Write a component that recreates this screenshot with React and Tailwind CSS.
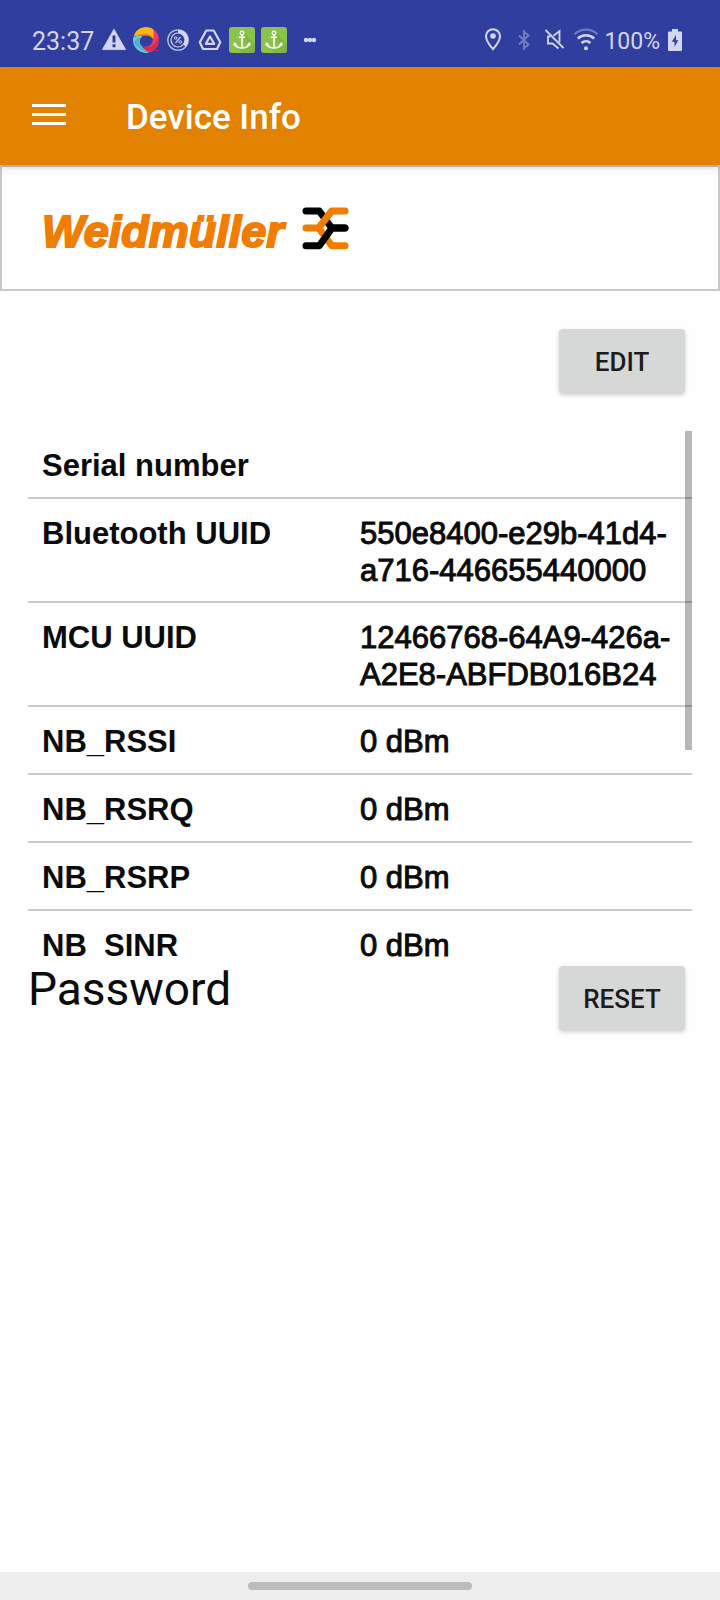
import React from "react";

const INK = "#d3d6ee";

const rows = [
  { label: "Serial number", value: "" },
  { label: "Bluetooth UUID", value: "550e8400-e29b-41d4-a716-446655440000" },
  { label: "MCU UUID", value: "12466768-64A9-426a-A2E8-ABFDB016B24" },
  { label: "NB_RSSI", value: "0 dBm" },
  { label: "NB_RSRQ", value: "0 dBm" },
  { label: "NB_RSRP", value: "0 dBm" },
  { label: "NB_SINR", value: "0 dBm" },
];

function Icon({ children, ...rest }) {
  return (
    <svg className="size-[26px] shrink-0" viewBox="0 0 26 26" fill="none" aria-hidden="true" {...rest}>
      {children}
    </svg>
  );
}

function WarningIcon() {
  return (
    <Icon>
      <path d="M13 2.200 24.600 22.600H1.400Z" fill={INK} stroke={INK} strokeWidth="0.8" strokeLinejoin="round" />
      <path d="M13 8.500v7M13 17.200v3" stroke="#303f9f" strokeWidth="3" />
    </Icon>
  );
}

function SwirlIcon() {
  return (
    <Icon>
      <path d="M20 2.500C24 4.500 26 8.500 26 13c0 5.500-3.500 10.300-8.500 12-3 .5-5-1.500-7-5.500 5 1 8-1.500 9-5 1-4 .8-8 .5-12Z" fill="#ef3a63" />
      <path d="M25.500 9c-1 5-3.500 8.500-7.500 10.500-2 1-4.500 1-7.500 0l2.500 4c5 1 8.500-.5 10.500-4 1.800-3 2.300-6 2-10.500Z" fill="#dc2456" />
      <path d="M.3 10C4 8.700 7.500 8.500 9.500 9.300 6 12 6 16 8.500 18.500c2 3 5 6 7.500 7.200C8 27 .5 21.500 0 14c0-1.500 0-2.700.3-4Z" fill="#6fcbe2" />
      <path d="M.1 15C3 12.500 5 10.500 8 10c-2.500 3-2 6.500.5 9l5.500 6.500C9 24 3 20 .1 15Z" fill="#4eb2d0" />
      <path d="M.8 9.500C2 4 7 0 13 0c3 0 6 1 7.500 2.800C21 6 20.800 9 20 12c-2-4-5.500-5.500-10-4.500C6 8 3 8 .8 9.500Z" fill="#fdb515" />
      <path d="M.8 9.500C4 7.500 9 6.500 14 6.500c3.500.5 5 2.500 6 5.500-2-3-5.500-4.200-10-3.200C6 9 3 8.800.8 9.500Z" fill="#f58a1f" />
      <path d="M22.500 23.500H26" stroke="#dc2456" strokeWidth="1" />
    </Icon>
  );
}

function PercentIcon() {
  return (
    <Icon>
      <circle cx="13" cy="13" r="10.200" stroke={INK} strokeWidth="1.300" opacity="0.85" />
      <circle cx="13" cy="13" r="7" stroke={INK} strokeWidth="1.200" />
      <path d="M13 4.400A8.600 8.600 0 0 1 19.500 18.600" stroke={INK} strokeWidth="3.200" />
      <path d="M15.500 9.800 10.500 16.200" stroke={INK} strokeWidth="1.200" />
      <circle cx="10.700" cy="11" r="1.300" stroke={INK} strokeWidth="1" />
      <circle cx="15.300" cy="15" r="1.300" stroke={INK} strokeWidth="1" />
    </Icon>
  );
}

function DriveIcon() {
  return (
    <Icon>
      <path d="M9.300 3.500h7.400L23.200 15.200 20 22H6L2.800 15.200Z" stroke={INK} strokeWidth="2.200" strokeLinejoin="round" />
      <path d="M13 9.500 17.200 16.800H8.800Z" stroke={INK} strokeWidth="2.200" strokeLinejoin="round" />
    </Icon>
  );
}

function AnchorIcon() {
  return (
    <Icon>
      <rect width="26" height="26" rx="3" fill="#8bc34a" />
      <path d="M15 6 26 17v6a3 3 0 0 1-3 3h-9L8 21l10-1Z" fill="#7cb342" opacity="0.75" />
      <circle cx="13" cy="6" r="1.800" stroke="#fff" strokeWidth="1.300" />
      <path d="M13 8v13M9.800 10.300h6.400M5.600 16.800C6.500 19.500 9.500 21 13 21s6.500-1.500 7.400-4.200" stroke="#fff" strokeWidth="1.600" />
      <path d="m4.300 19 .6-4 3.400 2.500ZM21.700 19l-.6-4-3.400 2.500Z" fill="#fff" />
    </Icon>
  );
}

function DotsIcon() {
  return (
    <Icon fill={INK}>
      <circle cx="13" cy="13" r="2.200" />
      <circle cx="17" cy="13" r="2.200" />
      <circle cx="21" cy="13" r="2.200" />
    </Icon>
  );
}

function LocationIcon() {
  return (
    <Icon>
      <path d="M13 2.200a7 7 0 0 0-7 7c0 4.800 7 13 7 13s7-8.200 7-13a7 7 0 0 0-7-7Z" stroke={INK} strokeWidth="2" />
      <circle cx="13" cy="9" r="2.800" fill={INK} />
    </Icon>
  );
}

function BluetoothIcon() {
  return (
    <Icon opacity="0.4">
      <path d="M8 8.500 17.500 17.500 13 21.500V4.500L17.500 8.500 8 17.500" stroke={INK} strokeWidth="2" />
    </Icon>
  );
}

function MuteIcon() {
  return (
    <Icon>
      <path d="m3.500 3 18 18" stroke={INK} strokeWidth="1.800" />
      <path d="M11.500 8.800 17.500 4v11.500M8.500 9.500H6v7h4.500l6 5" stroke={INK} strokeWidth="1.800" />
    </Icon>
  );
}

function WifiIcon() {
  return (
    <Icon>
      <path d="M1.500 7.200C8 1.200 18 1.200 24.500 7.200" stroke={INK} strokeWidth="2.200" opacity="0.4" />
      <path d="M4.800 11.500C9.500 7.200 16.500 7.200 21.200 11.500" stroke={INK} strokeWidth="2.500" />
      <path d="M8.600 16c2.600-2.500 6.200-2.500 8.800 0" stroke={INK} strokeWidth="2.500" />
      <circle cx="13" cy="21.200" r="2" fill={INK} />
    </Icon>
  );
}

function BatteryIcon() {
  return (
    <svg className="h-[22px] w-[14px] shrink-0" viewBox="0 0 14 22" aria-hidden="true">
      <path d="M4 0h6v2.500h2.800A1.200 1.200 0 0 1 14 3.700v17.100a1.200 1.200 0 0 1-1.200 1.200H1.200A1.200 1.200 0 0 1 0 20.800V3.700a1.200 1.200 0 0 1 1.200-1.200H4Z" fill={INK} />
      <path d="M8 6 3.800 12.800h2.700V18l3.800-6.800H8Z" fill="#303f9f" />
    </svg>
  );
}

function Emblem() {
  return (
    <svg className="h-[43px] w-[47px] shrink-0" viewBox="36 34 141 129" fill="none" strokeWidth="21" strokeLinecap="round" strokeLinejoin="round" aria-hidden="true">
      <path d="M48 46H88L125 97H165" stroke="#000" />
      <path d="M165 150H125L86 97" stroke="#f07d00" />
      <path d="M48 97H86L125 46H165" stroke="#f07d00" />
      <path d="M48 150H88L126 97H165" stroke="#000" />
    </svg>
  );
}

function ActionButton({ children }) {
  return (
    <button
      type="button"
      className="mr-[7px] h-16 w-[126px] shrink-0 rounded-[4px] bg-[#d6d8d7] pt-[2px] text-[26px] leading-8 font-medium text-[#1c1c1c] shadow-[0_2px_4px_rgba(0,0,0,0.2)]"
    >
      {children}
    </button>
  );
}

export default function App() {
  return (
    <div className="flex min-h-screen flex-col bg-[#fefefe] font-[Roboto,sans-serif] text-[#0b0b0b]">
      <div className="flex h-[67px] items-center justify-between bg-[#303f9f] pt-[13px] pr-[38px] pl-8 text-[#d3d6ee]">
        <div className="flex items-center gap-[6px]">
          <span className="mr-px pt-1 text-[25px] leading-8">23:37</span>
          <WarningIcon />
          <SwirlIcon />
          <PercentIcon />
          <DriveIcon />
          <AnchorIcon />
          <AnchorIcon />
          <DotsIcon />
        </div>
        <div className="flex items-center gap-[5px]">
          <LocationIcon />
          <BluetoothIcon />
          <MuteIcon />
          <WifiIcon />
          <span className="mr-[3px] pt-1 text-[23px] leading-8">100%</span>
          <BatteryIcon />
        </div>
      </div>

      <header className="relative flex h-[98px] items-center gap-[60px] bg-[#e38200] pl-8 text-white shadow-[0_2px_6px_rgba(0,0,0,0.2)]">
        <button type="button" aria-label="Open menu" className="flex w-[34px] flex-col gap-[6px] pb-1">
          <span className="h-[3px] w-full bg-white" />
          <span className="h-[3px] w-full bg-white" />
          <span className="h-[3px] w-full bg-white" />
        </button>
        <h1 className="pt-1 text-[35px] leading-10 font-medium">Device Info</h1>
      </header>

      <div className="flex h-[126px] items-center gap-[18px] border-2 border-[#c8c8c8] pl-10">
        <span className="pt-2 font-['Liberation_Sans',Arial,sans-serif] text-[45px] leading-[52px] font-bold text-[#f07d00] italic [-webkit-text-stroke:2px_#f07d00]">
          Weidmüller
        </span>
        <Emblem />
      </div>

      <main className="flex flex-1 flex-col px-7 pt-[38px]">
        <div className="flex justify-end">
          <ActionButton>EDIT</ActionButton>
        </div>

        <div className="relative mt-[38px]">
          <div className="h-[526px] overflow-y-auto [scrollbar-width:none]">
            <table className="w-full table-fixed border-separate border-spacing-0 text-left font-['Liberation_Sans',Arial,sans-serif] text-[31px] leading-[37px]">
              <tbody>
                {rows.map((row) => (
                  <tr key={row.label} className="h-[68px] align-top">
                    <th scope="row" className="w-1/2 border-b-2 border-[#cbcbcb] pt-4 pb-3 pl-[14px] font-bold">
                      {row.label}
                    </th>
                    <td className="w-1/2 border-b-2 border-[#cbcbcb] pt-4 pb-3 [-webkit-text-stroke:1px_#0b0b0b]">
                      {row.value}
                    </td>
                  </tr>
                ))}
              </tbody>
            </table>
          </div>
          <div className="absolute top-0 right-0 h-[319px] w-[7px] bg-black/28" />
        </div>

        <div className="flex items-start justify-between">
          <h2 className="text-[46px] leading-[64px]">Password</h2>
          <div className="pt-[9px]">
            <ActionButton>RESET</ActionButton>
          </div>
        </div>
      </main>

      <div className="flex h-7 items-center justify-center bg-[#eeeeee]">
        <div className="h-2 w-[224px] rounded-full bg-[#bcbcbc]" />
      </div>
    </div>
  );
}
